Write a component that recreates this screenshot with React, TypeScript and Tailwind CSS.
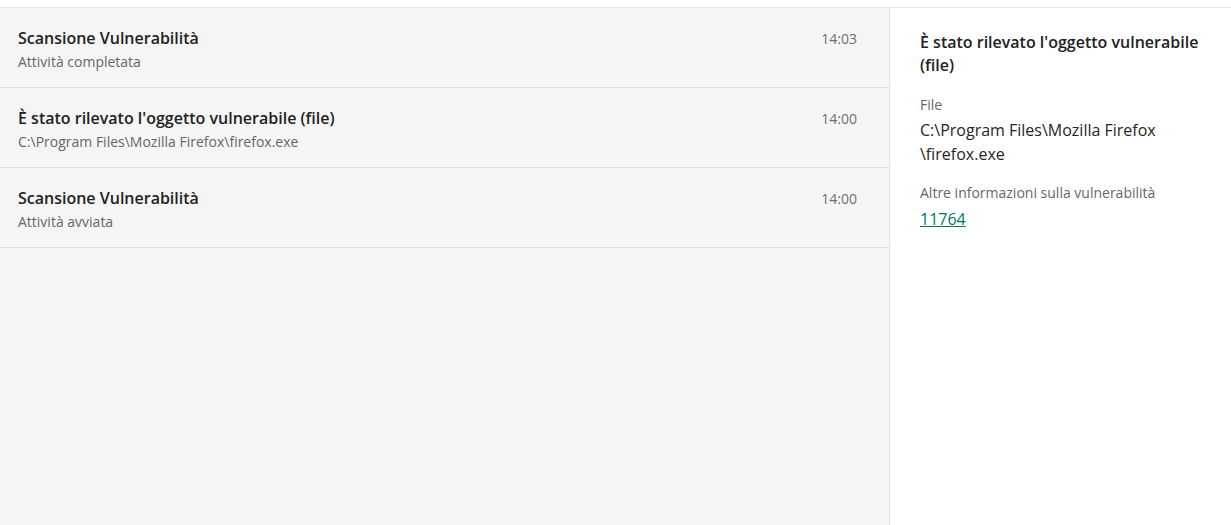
import React from "react";

const EVENTS = [
  { title: "Scansione Vulnerabilità", sub: "Attività completata", time: "14:03" },
  { title: "È stato rilevato l'oggetto vulnerabile (file)", sub: "C:\\Program Files\\Mozilla Firefox\\firefox.exe", time: "14:00" },
  { title: "Scansione Vulnerabilità", sub: "Attività avviata", time: "14:00" },
];

export default function App() {
  return (
    <div className="h-[525px] w-[1231px] bg-white font-['Open_Sans',sans-serif] text-[#1f1f1f] overflow-hidden">
      <div className="h-[8px] border-b border-[#e6e6e6]" />
      <div className="flex h-[517px]">
        {/* Event list */}
        <div className="w-[890px] bg-[#f5f5f5] border-r border-[#e3e3e3]">
          {EVENTS.map((e, i) => (
            <div key={i} className="flex h-[80px] justify-between border-b border-[#e0e0e0] pl-[18px] pr-[32px] pt-[18px]">
              <div>
                <div className="text-[16px] font-semibold leading-[24px] text-[#222222]">{e.title}</div>
                <div className="text-[14px] leading-[24px] text-[#666666]">{e.sub}</div>
              </div>
              <div className="text-[14px] leading-[26px] text-[#6e6e6e]">{e.time}</div>
            </div>
          ))}
        </div>

        {/* Details */}
        <div className="flex-1 pl-[30px] pr-[16px] pt-[23px]">
          <div className="text-[16px] font-semibold leading-[23px] text-[#222222]">
            È stato rilevato l'oggetto vulnerabile (file)
          </div>
          <div className="mt-[18px] text-[14px] leading-[20px] text-[#666666]">File</div>
          <div className="mt-[3px] text-[16px] leading-[24px] text-[#262626]">C:\Program Files\Mozilla Firefox \firefox.exe</div>
          <div className="mt-[17px] text-[14px] leading-[20px] text-[#666666]">Altre informazioni sulla vulnerabilità</div>
          <div className="mt-[3px] leading-[26px]">
            <a href="#" className="text-[16px] text-[#00776b] underline">11764</a>
          </div>
        </div>
      </div>
    </div>
  );
}
